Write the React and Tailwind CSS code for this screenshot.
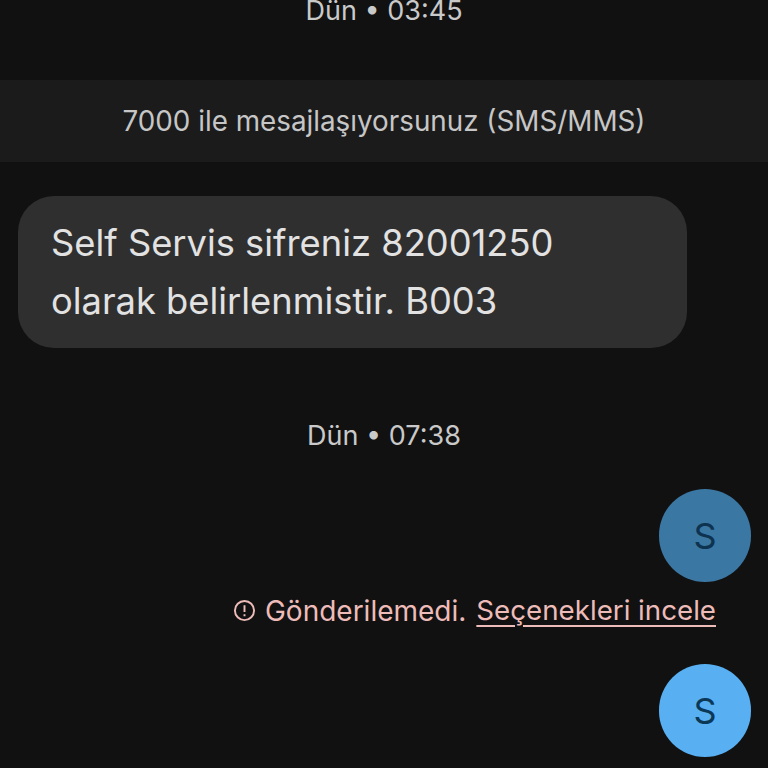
export default function App() {
  return (
    <div className="h-[768px] w-[768px] overflow-hidden bg-[#111112] font-['Inter','Roboto',sans-serif] flex flex-col">
      <div className="-mt-[10px] h-[42px] flex items-center justify-center text-[27px] leading-[42px] text-[#c9c9c9]">Dün • 03:45</div>
      <div className="mt-[48px] h-[82px] pt-[2px] bg-[#1b1b1c] flex items-center justify-center text-[27.8px] text-[#c6c6c6]">7000 ile mesajlaşıyorsunuz (SMS/MMS)</div>
      <div className="mt-[34px] ml-[18px] w-[669px] h-[152px] rounded-[36px] bg-[#2f2f30] pl-[33px] pt-[18px] text-[36.3px] leading-[58px] text-[#e2e2e2]">
        <div>Self Servis sifreniz 82001250</div>
        <div>olarak belirlenmistir. B003</div>
      </div>
      <div className="mt-[67px] h-[42px] flex items-center justify-center text-[27px] text-[#c9c9c9]">Dün • 07:38</div>
      <div className="mt-[32px] mr-[17px] self-end w-[92px] h-[93px] rounded-[46px] bg-[#3b77a3] flex items-center justify-center text-[36px] text-[#0e3350]">S</div>
      <div className="mt-[8px] mr-[52px] self-end h-[40px] pt-[1px] flex items-center text-[27.7px] text-[#eebcb8]">
        <svg className="w-[23px] h-[23px] mr-[9px]" viewBox="0 0 24 24" fill="none" stroke="currentColor" strokeWidth="2">
          <circle cx="12" cy="12" r="10" />
          <path d="M12 6.5v7M12 16v2" />
        </svg>
        <span className="text-[28px]">Gönderilemedi.</span>
        <span className="ml-[10px] underline underline-offset-[5px] decoration-2">Seçenekleri incele</span>
      </div>
      <div className="mt-[34px] mr-[17px] self-end w-[92px] h-[93px] rounded-[46px] bg-[#58b0f2] flex items-center justify-center text-[36px] text-[#0c3858]">S</div>
    </div>
  );
}
